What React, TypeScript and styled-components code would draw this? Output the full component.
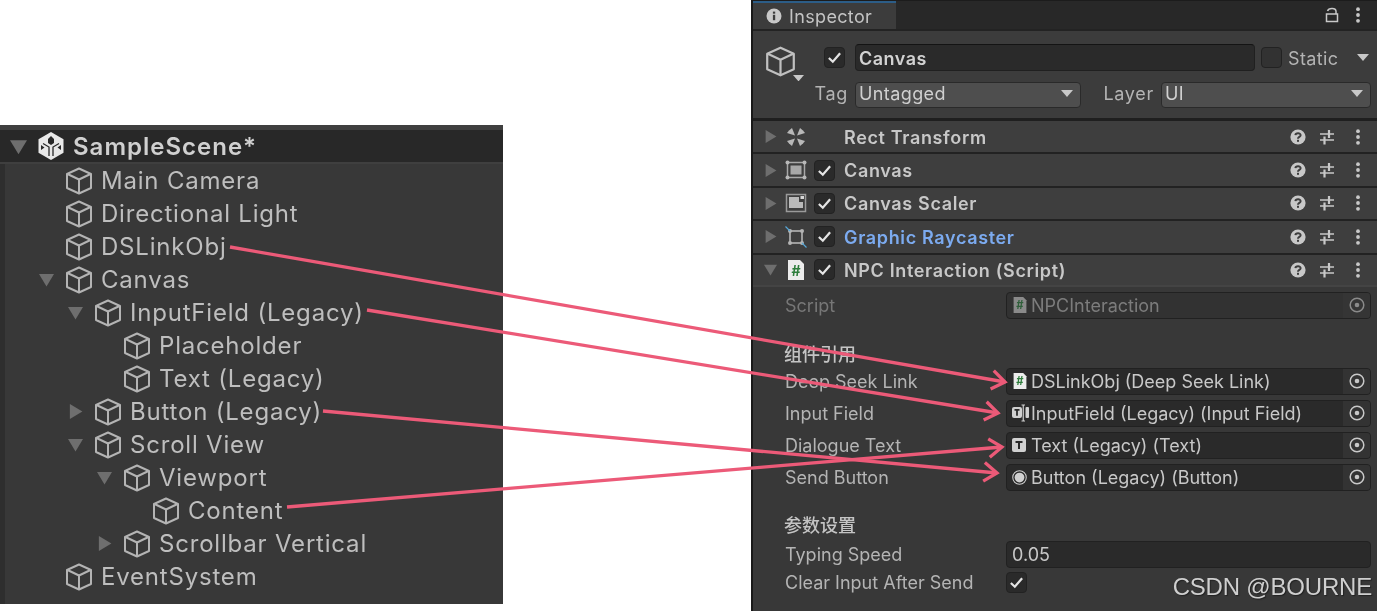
import React from "react";
import styled, { createGlobalStyle } from "styled-components";

const GlobalStyle = createGlobalStyle`
    html, body {
        margin: 0;
        padding: 0;
        background: #ffffff;
    }
`;

const Page = styled.div`
    position: relative;
    width: 1377px;
    height: 611px;
    overflow: hidden;
    background: #ffffff;
    display: flex;
    justify-content: space-between;
    align-items: flex-start;
    font-family: Inter, "Noto Sans CJK SC", sans-serif;
    filter: blur(0.35px);
`;

/* hierarchy */

const Hierarchy = styled.div`
    width: 503px;
    height: 479px;
    margin-top: 125px;
    background: #383838;
    border-top: 5px solid #3f3f3f;
    box-sizing: border-box;
`;

const SceneHeader = styled.div`
    height: 32px;
    background: #282828;
    border-bottom: 2px solid #3f3f3f;
    display: flex;
    align-items: center;
    padding-left: 10px;
`;

const SceneName = styled.span`
    margin-left: 9px;
    font-size: 24px;
    font-weight: 600;
    letter-spacing: 1px;
    color: #d0d0d0;
`;

const LogoSlot = styled.span`
    margin-left: 1px;
    display: flex;
`;

const TreeBody = styled.div`
    border-left: 5px solid #2e2e2e;
    height: 440px;
`;

const TreeRow = styled.div<{ $level: number }>`
    height: 33px;
    display: flex;
    align-items: center;
    padding-left: ${(p) => 33 + p.$level * 29}px;
`;

const ArrowSlot = styled.span`
    width: 17px;
    height: 17px;
    margin-right: 10px;
    display: flex;
    align-items: center;
    justify-content: center;
`;

const TreeLabel = styled.span`
    margin-left: 8px;
    font-size: 24px;
    letter-spacing: 0.8px;
    color: #bebebe;
    white-space: nowrap;
`;

/* inspector */

const Inspector = styled.div`
    width: 626px;
    height: 611px;
    background: #383838;
    border-left: 2px solid #191919;
    box-sizing: border-box;
    display: flex;
    flex-direction: column;
`;

const TabBar = styled.div`
    height: 29px;
    flex: none;
    background: #282828;
    border-top: 1px solid #1c1c1c;
    box-sizing: border-box;
    display: flex;
    align-items: stretch;
    justify-content: space-between;
    padding-right: 16px;
`;

const Tab = styled.div`
    width: 143px;
    background: #3c3c3c;
    border-top: 2px solid #2c5d87;
    box-sizing: border-box;
    display: flex;
    align-items: center;
    gap: 7px;
    padding-left: 13px;
    font-size: 18px;
    letter-spacing: 0.35px;
    color: #c4c4c4;
`;

const TabTools = styled.div`
    display: flex;
    align-items: center;
    gap: 16px;
`;

const ObjectHeader = styled.div`
    height: 92px;
    flex: none;
    box-sizing: border-box;
    background: #3c3c3c;
    border-top: 2px solid #232323;
    border-bottom: 3px solid #1f1f1f;
    display: flex;
    flex-direction: column;
    gap: 10px;
    padding: 13px 6px 0 0;
    position: relative;
`;

const ObjectIconSlot = styled.div`
    position: absolute;
    left: 12px;
    top: 15px;
`;

const ObjectIconCaret = styled.span`
    position: absolute;
    left: 28px;
    top: 29px;
    display: flex;
`;

const HeaderRow = styled.div`
    display: flex;
    align-items: center;
    height: 27px;
`;

const NameCheck = styled.span`
    margin-left: 71px;
    display: flex;
`;

const NameField = styled.div`
    width: 400px;
    height: 27px;
    margin-left: 10px;
    box-sizing: border-box;
    background: #2a2a2a;
    border: 1px solid #202020;
    border-top-color: #141414;
    border-radius: 4px;
    padding: 2px 0 0 3px;
    display: flex;
    align-items: center;
    font-size: 18px;
    font-weight: 600;
    letter-spacing: 0.5px;
    color: #d2d2d2;
`;

const StaticCheck = styled.span`
    margin-left: 6px;
    display: flex;
`;

const StaticLabel = styled.span`
    margin-left: 6px;
    margin-top: 1px;
    font-size: 18px;
    letter-spacing: 0.35px;
    color: #b4b4b4;
    flex: 1;
`;

const StaticCaret = styled.span`
    margin-right: 2px;
    display: flex;
`;

const HeaderCaption = styled.span<{ $width: number }>`
    width: ${(p) => p.$width}px;
    text-align: right;
    font-size: 18px;
    letter-spacing: 0.7px;
    color: #b4b4b4;
    margin-right: 7px;
    margin-top: -2px;
    flex: none;
`;

const Dropdown = styled.div<{ $width: number }>`
    width: ${(p) => p.$width}px;
    height: 26px;
    flex: none;
    box-sizing: border-box;
    background: #4e4e4e;
    border: 1px solid #2a2a2a;
    border-radius: 4px;
    padding: 0 7px 2px 3px;
    display: flex;
    align-items: center;
    justify-content: space-between;
    font-size: 18px;
    letter-spacing: 0.4px;
    color: #d0d0d0;
`;

const ComponentRow = styled.div<{ $open?: boolean }>`
    height: ${(p) => (p.$open ? 30 : 31.4)}px;
    flex: none;
    background: #3e3e3e;
    border-bottom: 2px solid ${(p) => (p.$open ? "#444444" : "#222222")};
    display: flex;
    align-items: center;
    padding-left: 11px;
    padding-right: 16px;
`;

const IconSlot = styled.span`
    width: 22px;
    height: 22px;
    margin-left: 8px;
    margin-right: 7px;
    flex: none;
    display: flex;
    align-items: center;
    justify-content: center;
`;

const ComponentTitle = styled.span<{ $accent?: boolean; $noCheck?: boolean }>`
    margin-left: ${(p) => (p.$noCheck ? 30 : 9)}px;
    margin-top: 1px;
    flex: 1;
    font-size: 18px;
    font-weight: 600;
    letter-spacing: 0.65px;
    color: ${(p) => (p.$accent ? "#7cabf0" : "#c8c8c8")};
`;

const RowTools = styled.div`
    display: flex;
    align-items: center;
    gap: 13px;
`;

const KebabSlot = styled.span`
    width: 6px;
    margin-left: 7px;
    display: flex;
`;

const Check = styled.span<{ $size?: number; $empty?: boolean }>`
    width: ${(p) => p.$size ?? 21}px;
    height: ${(p) => p.$size ?? 21}px;
    flex: none;
    box-sizing: border-box;
    background: ${(p) => (p.$empty ? "#323232" : "#2a2a2a")};
    border: 1px solid #222222;
    border-radius: 4px;
    display: flex;
    align-items: center;
    justify-content: center;
`;

const Body = styled.div`
    flex: 1;
    padding: 5px 6px 0 32px;
    display: flex;
    flex-direction: column;
`;

const PropRow = styled.div<{ $dim?: boolean; $gapBelow?: number; $gapAbove?: number }>`
    height: 27px;
    margin-top: ${(p) => p.$gapAbove ?? 0}px;
    margin-bottom: ${(p) => p.$gapBelow ?? 5}px;
    display: flex;
    align-items: center;
    font-size: 18px;
    color: ${(p) => (p.$dim ? "#777777" : "#b4b4b4")};
`;

const PropLabel = styled.span`
    width: 221px;
    flex: none;
    white-space: nowrap;
`;

const ObjectField = styled.div<{ $dim?: boolean }>`
    width: 365px;
    height: 27px;
    box-sizing: border-box;
    background: ${(p) => (p.$dim ? "#323232" : "#2a2a2a")};
    border: 1px solid #212121;
    border-radius: 4px;
    padding-left: 5px;
    display: flex;
    align-items: center;
    color: ${(p) => (p.$dim ? "#7c7c7c" : "#c8c8c8")};
    overflow: hidden;
`;

const FieldIcon = styled.span`
    width: 19px;
    height: 18px;
    flex: none;
    display: flex;
    align-items: center;
    justify-content: flex-start;
`;

const FieldText = styled.span`
    flex: 1;
    white-space: nowrap;
`;

const TargetButton = styled.span<{ $dim?: boolean }>`
    width: 27px;
    height: 25px;
    flex: none;
    background: ${(p) => (p.$dim ? "#353535" : "#333333")};
    display: flex;
    align-items: center;
    justify-content: center;
`;

const SectionTitle = styled.div<{ $top: number; $bottom?: number }>`
    margin-top: ${(p) => p.$top}px;
    margin-bottom: ${(p) => p.$bottom ?? 0}px;
    margin-left: -1px;
    height: 22px;
    line-height: 22px;
    font-size: 18px;
    font-weight: 500;
    color: #c4c4c4;
`;

const ValueField = styled.div`
    width: 365px;
    height: 27px;
    box-sizing: border-box;
    background: #2a2a2a;
    border: 1px solid #212121;
    border-radius: 4px;
    padding-left: 5px;
    display: flex;
    align-items: center;
    color: #c8c8c8;
`;

const Watermark = styled.div`
    position: absolute;
    right: 5px;
    top: 573px;
    font-family: "Liberation Sans", Arial, sans-serif;
    font-size: 24px;
    letter-spacing: -0.2px;
    color: #cfcfcf;
    text-shadow: 1px 1px 1px #222222;
`;

const ArrowOverlay = styled.svg`
    position: absolute;
    inset: 0;
    pointer-events: none;
`;

/* icons */

const Triangle = ({ dir, size = 15, color = "#6e6e6e" }: { dir: "down" | "right"; size?: number; color?: string }) => (
    <svg width={size} height={size} viewBox="0 0 12 12">
        <path d={dir === "down" ? "M0 1.5h12L6 11.5z" : "M1.5 0v12l10-6z"} fill={color} />
    </svg>
);

const Caret = ({ width = 12, color = "#c8c8c8" }: { width?: number; color?: string }) => (
    <svg width={width} height={(width * 7) / 12} viewBox="0 0 12 7">
        <path d="M0 0h12L6 7z" fill={color} />
    </svg>
);

const Cube = ({ size = 28, color = "#b4b4b4", width = 2 }: { size?: number; color?: string; width?: number }) => (
    <svg width={size} height={size} viewBox="0 0 28 28" fill="none" stroke={color} strokeWidth={width} strokeLinejoin="round">
        <path d="M14 1.5 26 7v14l-12 5.5L2 21V7z" />
        <path d="M2.5 7 14 12.5 25.5 7M14 12.5v14" />
    </svg>
);

const UnityLogo = () => (
    <svg width="26" height="28" viewBox="0 0 26 28">
        <path d="M13 0 25.500 7.200v13.600L13 28 .5 20.800V7.200z" fill="#e8e8e8" />
        <path d="M10 7 13 4 16 7v4l-3 2-3-2z" fill="#282828" />
        <path d="M5 11.500 11 15v9M21 11.500 15 15v9" stroke="#282828" strokeWidth="1.300" fill="none" />
        <path d="M3 13v5l3.500-2.500zM23 13v5l-3.500-2.500z" fill="#282828" />
    </svg>
);

const CheckMark = ({ size = 15 }: { size?: number }) => (
    <svg width={size} height={size} viewBox="0 0 16 16" fill="none" stroke="#e4e4e4" strokeWidth="2.4">
        <path d="M2 8.500 6.200 12.500 14 3.500" />
    </svg>
);

const InfoIcon = () => (
    <svg width="16" height="16" viewBox="0 0 16 16">
        <circle cx="8" cy="8" r="7.500" fill="#c8c8c8" />
        <rect x="6.900" y="6.800" width="2.300" height="5.400" fill="#3c3c3c" />
        <rect x="6.900" y="3.600" width="2.300" height="2.100" fill="#3c3c3c" />
    </svg>
);

const LockIcon = () => (
    <svg width="14" height="16" viewBox="0 0 14 16" fill="none" stroke="#c8c8c8" strokeWidth="1.500">
        <rect x="1.500" y="7" width="11" height="7.500" />
        <path d="M2.500 4C3.500 1 10.500 0.500 11 4v3" />
    </svg>
);

const Kebab = () => (
    <svg width="6" height="16" viewBox="0 0 6 16" fill="#c8c8c8">
        <circle cx="3" cy="2.200" r="1.900" />
        <circle cx="3" cy="8" r="1.900" />
        <circle cx="3" cy="13.800" r="1.900" />
    </svg>
);

const HelpIcon = () => (
    <svg width="16" height="16" viewBox="0 0 16 16">
        <circle cx="8" cy="8" r="7.600" fill="#c8c8c8" />
        <path d="M5.400 6.200C5.600 3.800 10.600 3.600 10.600 6.200 10.600 8 8 7.900 8 9.800" fill="none" stroke="#3e3e3e" strokeWidth="2" />
        <rect x="7" y="10.800" width="2" height="2" fill="#3e3e3e" />
    </svg>
);

const PresetIcon = () => (
    <svg width="16" height="16" viewBox="0 0 16 16" stroke="#c8c8c8" strokeWidth="1.500" fill="none">
        <path d="M1 5h14M1 11h14" />
        <path d="M10 1v8M5.500 7.500v8" strokeWidth="2.200" />
    </svg>
);

const RectIcon = () => (
    <svg width="20" height="20" viewBox="0 0 20 20" fill="#b8b8b8">
        <path d="M6 1 9 8.500 1 6 3 3.500z" />
        <path d="M14 1 11 8.500 19 6 17 3.500z" />
        <path d="M6 19 9 11.500 1 14 3 16.500z" />
        <path d="M14 19 11 11.500 19 14 17 16.500z" />
    </svg>
);

const CanvasIcon = () => (
    <svg width="22" height="20" viewBox="0 0 22 20">
        <rect x="2.500" y="2.500" width="17" height="15" fill="none" stroke="#a8a8a8" strokeWidth="1.500" />
        <rect x="5.500" y="5.500" width="11" height="9" fill="#a8a8a8" />
        <g fill="#b8b8b8">
            <circle cx="2.500" cy="2.500" r="2" />
            <circle cx="19.500" cy="2.500" r="2" />
            <circle cx="2.500" cy="17.500" r="2" />
            <circle cx="19.500" cy="17.500" r="2" />
        </g>
    </svg>
);

const ScalerIcon = () => (
    <svg width="22" height="20" viewBox="0 0 22 20">
        <rect x="1.500" y="1.500" width="19" height="17" fill="none" stroke="#9a9a9a" strokeWidth="1.500" />
        <path d="M4 4h10v5h4v6H4z" fill="#d0d0d0" opacity="0.85" />
        <rect x="15.500" y="3" width="3.500" height="3" fill="#d8d8d8" />
    </svg>
);

const RaycasterIcon = () => (
    <svg width="22" height="22" viewBox="0 0 22 22">
        <rect x="5" y="5" width="12" height="12" fill="none" stroke="#a8a8a8" strokeWidth="1.800" />
        <g fill="#b4b4b4">
            <circle cx="5" cy="5" r="2" />
            <circle cx="17" cy="5" r="2" />
            <circle cx="5" cy="17" r="2" />
            <circle cx="17" cy="17" r="2" />
        </g>
        <path d="M0.500 0.500 5 5M17 17l4.500 4.500" stroke="#56a8d8" strokeWidth="1.200" />
    </svg>
);

const ScriptIcon = ({ size = 20, dim }: { size?: number; dim?: boolean }) => (
    <svg width={size} height={size} viewBox="0 0 20 20">
        <path d="M2 0h12l4 4v16H2z" fill={dim ? "#8a8a8a" : "#ececec"} />
        <text x="10" y="15.500" textAnchor="middle" fontSize="14" fontWeight="700" fontFamily="Inter, sans-serif" fill={dim ? "#2f5f3a" : "#2e7d3c"}>
            #
        </text>
    </svg>
);

const InputFieldIcon = () => (
    <svg width="17" height="18" viewBox="0 0 17 18">
        <rect x="0" y="3" width="10" height="11" rx="2" fill="#d0d0d0" />
        <path d="M2.500 5.800h5M5 5.800v6" stroke="#2a2a2a" strokeWidth="1.800" fill="none" />
        <rect x="13.500" y="3" width="3.500" height="11" rx="1" fill="#d0d0d0" />
        <path d="M9.500 1h3.500M9.500 17h3.500M11.250 1v16" stroke="#d0d0d0" strokeWidth="1.200" fill="none" />
    </svg>
);

const TextIcon = () => (
    <svg width="14" height="14" viewBox="0 0 14 14">
        <rect width="14" height="14" rx="2" fill="#d0d0d0" />
        <path d="M3.500 4h7M7 4v7" stroke="#2a2a2a" strokeWidth="2" fill="none" />
    </svg>
);

const ButtonIcon = () => (
    <svg width="15" height="15" viewBox="0 0 16 16">
        <circle cx="8" cy="8" r="7.200" fill="none" stroke="#d0d0d0" strokeWidth="1.100" />
        <circle cx="8" cy="8" r="5.200" fill="#d0d0d0" />
    </svg>
);

const TargetIcon = ({ dim }: { dim?: boolean }) => (
    <svg width="16" height="16" viewBox="0 0 16 16">
        <circle cx="8" cy="8" r="6.800" fill="none" stroke={dim ? "#8a8a8a" : "#c8c8c8"} strokeWidth="1.500" />
        <circle cx="8" cy="8" r="2.300" fill={dim ? "#8a8a8a" : "#c8c8c8"} />
    </svg>
);

/* data */

const treeItems: { level: number; arrow?: "down" | "right"; label: string }[] = [
    { level: 0, label: "Main Camera" },
    { level: 0, label: "Directional Light" },
    { level: 0, label: "DSLinkObj" },
    { level: 0, arrow: "down", label: "Canvas" },
    { level: 1, arrow: "down", label: "InputField (Legacy)" },
    { level: 2, label: "Placeholder" },
    { level: 2, label: "Text (Legacy)" },
    { level: 1, arrow: "right", label: "Button (Legacy)" },
    { level: 1, arrow: "down", label: "Scroll View" },
    { level: 2, arrow: "down", label: "Viewport" },
    { level: 3, label: "Content" },
    { level: 2, arrow: "right", label: "Scrollbar Vertical" },
    { level: 0, label: "EventSystem" },
];

const components: { title: string; icon: React.ReactNode; check?: boolean; accent?: boolean; open?: boolean }[] = [
    { title: "Rect Transform", icon: <RectIcon /> },
    { title: "Canvas", icon: <CanvasIcon />, check: true },
    { title: "Canvas Scaler", icon: <ScalerIcon />, check: true },
    { title: "Graphic Raycaster", icon: <RaycasterIcon />, check: true, accent: true },
    { title: "NPC Interaction (Script)", icon: <ScriptIcon />, check: true, open: true },
];

const references: { label: string; value: string; icon: React.ReactNode }[] = [
    { label: "Deep Seek Link", value: "DSLinkObj (Deep Seek Link)", icon: <ScriptIcon size={16} /> },
    { label: "Input Field", value: "InputField (Legacy) (Input Field)", icon: <InputFieldIcon /> },
    { label: "Dialogue Text", value: "Text (Legacy) (Text)", icon: <TextIcon /> },
    { label: "Send Button", value: "Button (Legacy) (Button)", icon: <ButtonIcon /> },
];

const links: { from: [number, number]; to: [number, number] }[] = [
    { from: [230, 247], to: [1005, 382] },
    { from: [367, 310], to: [998, 413] },
    { from: [323, 411], to: [997, 473] },
    { from: [287, 507], to: [1002, 447] },
];

const headPoints = (from: [number, number], to: [number, number]) => {
    const angle = Math.atan2(to[1] - from[1], to[0] - from[0]);
    const point = (offset: number) =>
        `${to[0] - 16 * Math.cos(angle + offset)},${to[1] - 16 * Math.sin(angle + offset)}`;
    return `${point(0.62)} ${to[0]},${to[1]} ${point(-0.62)}`;
};

export default function App() {
    return (
        <>
            <GlobalStyle />
            <Page>
                <Hierarchy>
                    <SceneHeader>
                        <ArrowSlot>
                            <Triangle dir="down" size={17} />
                        </ArrowSlot>
                        <LogoSlot>
                            <UnityLogo />
                        </LogoSlot>
                        <SceneName>SampleScene*</SceneName>
                    </SceneHeader>
                    <TreeBody>
                        {treeItems.map((item) => (
                            <TreeRow key={item.label} $level={item.level}>
                                <ArrowSlot>{item.arrow && <Triangle dir={item.arrow} />}</ArrowSlot>
                                <Cube />
                                <TreeLabel>{item.label}</TreeLabel>
                            </TreeRow>
                        ))}
                    </TreeBody>
                </Hierarchy>

                <Inspector>
                    <TabBar>
                        <Tab>
                            <InfoIcon />
                            Inspector
                        </Tab>
                        <TabTools>
                            <LockIcon />
                            <Kebab />
                        </TabTools>
                    </TabBar>
                    <ObjectHeader>
                        <ObjectIconSlot>
                            <Cube size={31} color="#c0c0c0" />
                            <ObjectIconCaret>
                                <Caret width={11} />
                            </ObjectIconCaret>
                        </ObjectIconSlot>
                        <HeaderRow>
                            <NameCheck>
                                <Check>
                                    <CheckMark />
                                </Check>
                            </NameCheck>
                            <NameField>Canvas</NameField>
                            <StaticCheck>
                                <Check $empty />
                            </StaticCheck>
                            <StaticLabel>Static</StaticLabel>
                            <StaticCaret>
                                <Caret />
                            </StaticCaret>
                        </HeaderRow>
                        <HeaderRow>
                            <HeaderCaption $width={95}>Tag</HeaderCaption>
                            <Dropdown $width={226}>
                                Untagged
                                <Caret />
                            </Dropdown>
                            <HeaderCaption $width={73}>Layer</HeaderCaption>
                            <Dropdown $width={210}>
                                UI
                                <Caret />
                            </Dropdown>
                        </HeaderRow>
                    </ObjectHeader>

                    {components.map((item) => (
                        <ComponentRow key={item.title} $open={item.open}>
                            <Triangle dir={item.open ? "down" : "right"} size={13} />
                            <IconSlot>{item.icon}</IconSlot>
                            {item.check && (
                                <Check>
                                    <CheckMark />
                                </Check>
                            )}
                            <ComponentTitle $accent={item.accent} $noCheck={!item.check}>
                                {item.title}
                            </ComponentTitle>
                            <RowTools>
                                <HelpIcon />
                                <PresetIcon />
                                <KebabSlot>
                                    <Kebab />
                                </KebabSlot>
                            </RowTools>
                        </ComponentRow>
                    ))}

                    <Body>
                        <PropRow $dim>
                            <PropLabel>Script</PropLabel>
                            <ObjectField $dim>
                                <FieldIcon>
                                    <ScriptIcon size={16} dim />
                                </FieldIcon>
                                <FieldText>NPCInteraction</FieldText>
                                <TargetButton $dim>
                                    <TargetIcon dim />
                                </TargetButton>
                            </ObjectField>
                        </PropRow>
                        <SectionTitle $top={20} $bottom={2}>
                            组件引用
                        </SectionTitle>
                        {references.map((item) => (
                            <PropRow key={item.label}>
                                <PropLabel>{item.label}</PropLabel>
                                <ObjectField>
                                    <FieldIcon>{item.icon}</FieldIcon>
                                    <FieldText>{item.value}</FieldText>
                                    <TargetButton>
                                        <TargetIcon />
                                    </TargetButton>
                                </ObjectField>
                            </PropRow>
                        ))}
                        <SectionTitle $top={19}>参数设置</SectionTitle>
                        <PropRow $gapAbove={4} $gapBelow={1}>
                            <PropLabel>Typing Speed</PropLabel>
                            <ValueField>0.05</ValueField>
                        </PropRow>
                        <PropRow>
                            <PropLabel>Clear Input After Send</PropLabel>
                            <Check>
                                <CheckMark />
                            </Check>
                        </PropRow>
                    </Body>
                </Inspector>

                <ArrowOverlay width="1377" height="611" viewBox="0 0 1377 611" fill="none" stroke="#ec5a78" strokeWidth="3.300">
                    {links.map((link) => (
                        <g key={link.from.join()}>
                            <line x1={link.from[0]} y1={link.from[1]} x2={link.to[0]} y2={link.to[1]} />
                            <polyline points={headPoints(link.from, link.to)} />
                        </g>
                    ))}
                </ArrowOverlay>
                <Watermark>CSDN @BOURNE</Watermark>
            </Page>
        </>
    );
}
